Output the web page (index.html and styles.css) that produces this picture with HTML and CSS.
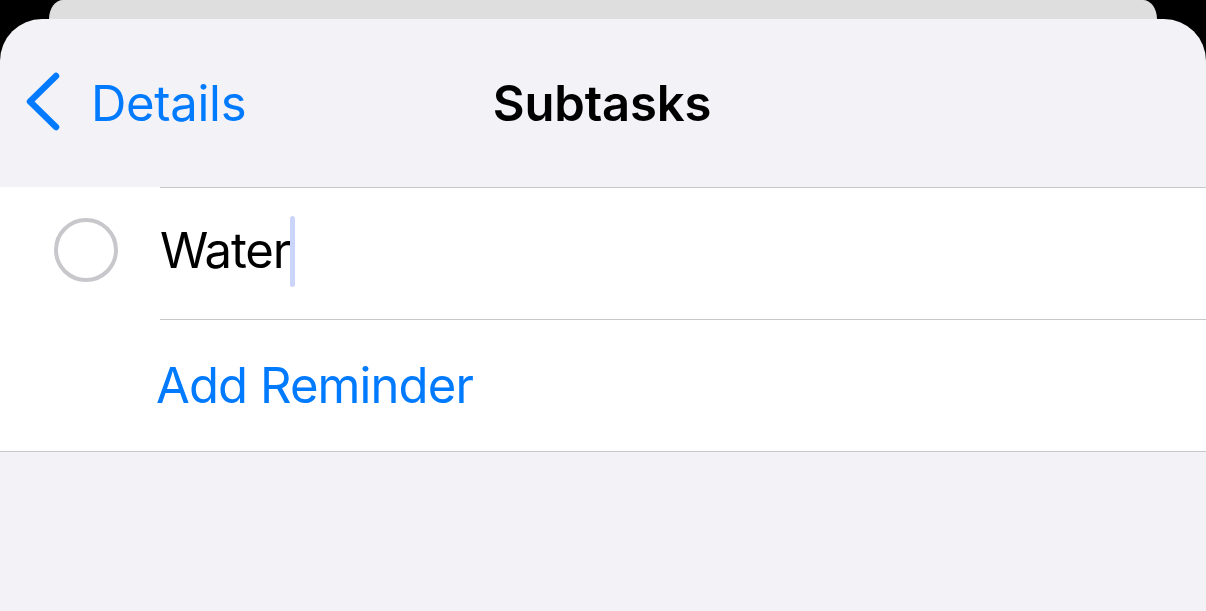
FILE: index.html
```html
<!DOCTYPE html>
<html>
<head>
<meta charset="utf-8">
<link rel="stylesheet" href="styles.css">
</head>
<body>
<div class="screen">
  <div class="backcard"></div>
  <div class="sheet">
    <div class="nav">
      <div class="back">
        <svg class="chevron" width="40" height="60" viewBox="0 0 40 60">
          <path d="M30 4 L4 29.5 L30 55" fill="none" stroke="#007aff" stroke-width="6.5" stroke-linecap="round" stroke-linejoin="round"/>
        </svg>
        <span class="back-label">Details</span>
      </div>
      <div class="title">Subtasks</div>
    </div>
    <div class="list">
      <div class="row">
        <div class="check"><span class="circle"></span></div>
        <div class="cell first">
          <span class="task-text">Water</span><span class="caret"></span>
        </div>
      </div>
      <div class="row">
        <div class="spacer"></div>
        <div class="cell add">
          <span class="add-label">Add Reminder</span>
        </div>
      </div>
    </div>
  </div>
</div>
</body>
</html>
```
FILE: styles.css
```css
html, body {
  margin: 0;
  padding: 0;
  background: #000;
  height: 100%;
}
body {
  font-family: "Inter", "Noto Sans", sans-serif;
  -webkit-font-smoothing: antialiased;
}
.screen {
  width: 1206px;
  height: 611px;
  display: flex;
  flex-direction: column;
  overflow: hidden;
}
.backcard {
  height: 19px;
  margin: 0 49px;
  background: #dedede;
  border-radius: 14px 14px 0 0 / 19px 19px 0 0;
  flex: none;
}
.sheet {
  flex: 1;
  background: #f2f2f7;
  border-radius: 42px 42px 0 0;
  display: flex;
  flex-direction: column;
}
.nav {
  height: 168px;
  flex: none;
  position: relative;
  display: flex;
  align-items: center;
  justify-content: center;
}
.back {
  position: absolute;
  left: 26px;
  top: 0;
  bottom: 0;
  display: flex;
  align-items: center;
  gap: 25px;
  color: #007aff;
}
.chevron {
  display: block;
  margin-top: -2px;
}
.back-label {
  font-size: 49px;
  letter-spacing: -0.3px;
  line-height: 1;
}
.title {
  font-size: 49px;
  font-weight: 600;
  letter-spacing: -0.2px;
  color: #000;
  line-height: 1;
  margin-left: -2px;
}
.list {
  background: #fff;
  border-bottom: 1px solid #c8c7cc;
  flex: none;
}
.row {
  display: flex;
  height: 132px;
}
.check, .spacer {
  width: 160px;
  flex: none;
  display: flex;
  align-items: center;
  padding-left: 54px;
  box-sizing: border-box;
}
.circle {
  width: 64px;
  height: 64px;
  border: 4px solid #c8c8cc;
  border-radius: 50%;
  box-sizing: border-box;
  margin-top: -6px;
}
.cell {
  flex: 1;
  display: flex;
  align-items: center;
  border-top: 1px solid #c8c7cc;
  font-size: 49px;
  letter-spacing: -0.9px;
}
.cell.first {
  padding-bottom: 6px;
}
.task-text {
  color: #000;
  letter-spacing: -1.2px;
}
.caret {
  width: 5px;
  height: 71px;
  border-radius: 3px;
  background: #cbd5fa;
  margin-top: 2px;
}
.add-label {
  color: #007aff;
  margin-left: -4px;
}
```
